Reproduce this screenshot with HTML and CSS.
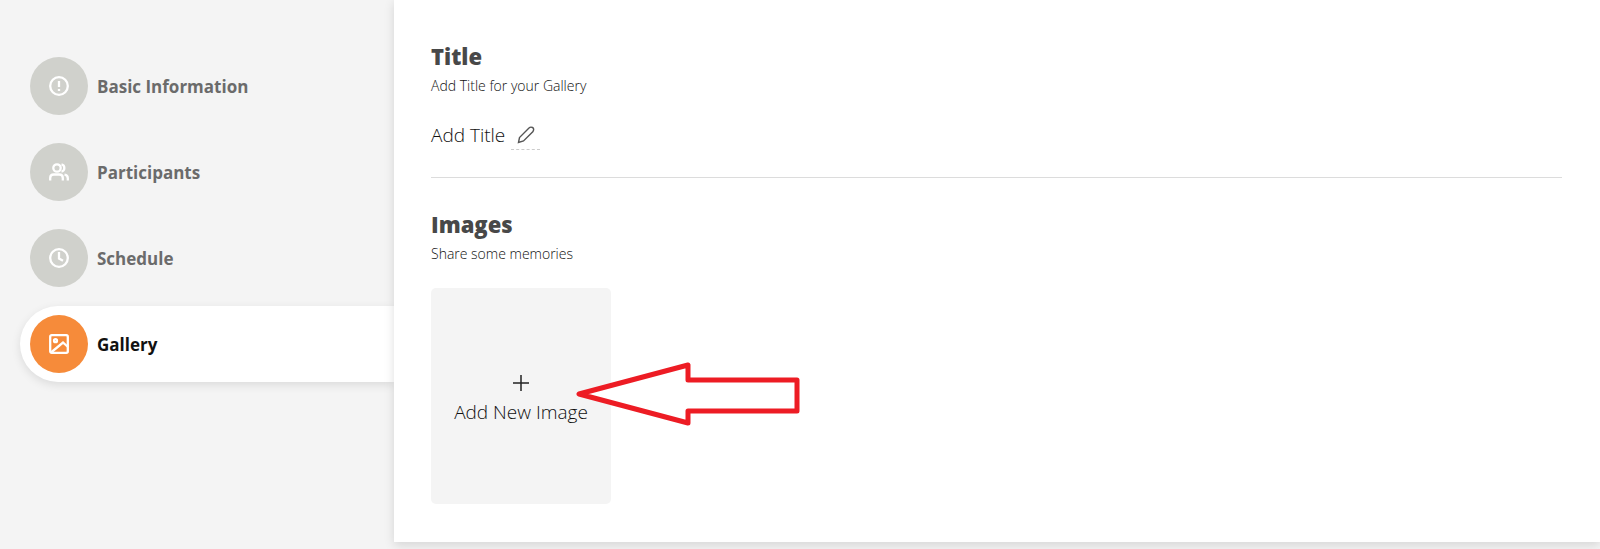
FILE: index.html
```html
<!DOCTYPE html>
<html lang="en">
<head>
  <meta charset="UTF-8">
  <title>Gallery</title>
  <meta name="viewport" content="width=device-width, initial-scale=1.0">
  <link rel="stylesheet" href="styles.css">
</head>
<body>
  <div class="page">
    <nav class="sidebar">
      <a href="#basic" class="step">
        <span class="step-icon">
          <svg viewBox="0 0 20 20"><circle cx="10" cy="10" r="8.800"/><path d="M10 5v6M10 13v2"/></svg>
        </span>
        Basic Information
      </a>
      <a href="#participants" class="step">
        <span class="step-icon">
          <svg viewBox="0 0 20 20"><circle cx="8" cy="6" r="3.700"/><path d="M1.200 18.500v-2.500q0-3.500 3.500-3.500h5.600q3.500 0 3.500 3.500v2.500M12.500 2.400a3.700 3.700 0 0 1 0 7.200M15.500 12.600q3.300.4 3.300 3.600v2.300"/></svg>
        </span>
        Participants
      </a>
      <a href="#schedule" class="step">
        <span class="step-icon">
          <svg viewBox="0 0 20 20"><circle cx="10" cy="10" r="8.800"/><path d="M10 4v6.500l4 2.200"/></svg>
        </span>
        Schedule
      </a>
      <a href="#gallery" class="step active">
        <span class="step-icon">
          <svg viewBox="0 0 20 20"><rect x="1.200" y="1.200" width="17.600" height="17.600" rx="1.500"/><path d="M2 18.500L14 8.500l5 4.500"/><circle cx="6.500" cy="6.700" r="1.500"/></svg>
        </span>
        Gallery
      </a>
    </nav>

    <main class="panel">
      <section class="title-section">
        <h2>Title</h2>
        <p class="hint">Add Title for your Gallery</p>
        <div class="title-row">
          <span>Add Title</span>
          <button type="button" class="edit-button" aria-label="Edit title">
            <svg viewBox="0 0 18 18"><path d="M1.500 16.500l1-5L12 2q1.500-1.500 3.500-.5t.5 4L6.500 15z"/></svg>
          </button>
        </div>
      </section>

      <section>
        <h2>Images</h2>
        <p class="hint">Share some memories</p>
        <div class="images">
          <button type="button" class="add-image">
            <svg class="plus" viewBox="0 0 16 16"><path d="M8 0v16M0 8h16"/></svg>
            Add New Image
          </button>
          <svg class="arrow" viewBox="0 0 226 64"><path d="M4 32L113 3v15h109v31H113v12z"/></svg>
        </div>
      </section>
    </main>
  </div>
</body>
</html>
```
FILE: styles.css
```css
* {
  box-sizing: border-box;
}
body {
  margin: 0;
  background: #f4f4f4;
  color: #111;
  font-family: "Segoe UI", "Open Sans", "Noto Sans", sans-serif;
}
h2, p {
  margin: 0;
}
button {
  font: inherit;
  color: inherit;
  border: none;
  cursor: pointer;
}
.page {
  display: flex;
  padding-bottom: 7px;
}
.sidebar {
  flex: 0 0 394px;
  display: flex;
  flex-direction: column;
  gap: 10px;
  padding: 48px 0 0 20px;
}
.step {
  display: flex;
  align-items: center;
  gap: 9px;
  height: 76px;
  padding-left: 10px;
  border-radius: 38px 0 0 38px;
  color: #6b6b6b;
  font-size: 17px;
  font-weight: 700;
  text-decoration: none;
}
.step-icon {
  display: flex;
  align-items: center;
  justify-content: center;
  width: 58px;
  height: 58px;
  border-radius: 50%;
  background: #d0d1cc;
}
.step-icon svg {
  width: 20px;
  height: 20px;
  fill: none;
  stroke: #fff;
  stroke-width: 2.3;
}
.step.active {
  background: #fff;
  color: #111;
  box-shadow: 0 3px 10px rgba(0, 0, 0, 0.1);
}
.step.active .step-icon {
  background: #f68b3a;
}
.panel {
  flex: 1;
  padding: 39px 38px 38px 37px;
  background: #fff;
  box-shadow: 0 3px 10px rgba(0, 0, 0, 0.13);
}
h2 {
  color: #484848;
  font-size: 22px;
  font-weight: 800;
  line-height: 35px;
}
.hint {
  font-size: 14px;
  font-weight: 300;
  line-height: 24px;
}
.title-section {
  margin-bottom: 29px;
  padding-bottom: 27px;
  border-bottom: 1px solid #dcdcdc;
}
.title-row {
  display: flex;
  gap: 6px;
  margin-top: 22px;
  font-size: 19px;
  font-weight: 300;
  line-height: 30px;
}
.edit-button {
  display: flex;
  align-items: center;
  justify-content: center;
  width: 29px;
  padding: 0;
  background: none;
  border-bottom: 1px dashed #ccc;
}
.edit-button svg {
  width: 18px;
  height: 18px;
  fill: none;
  stroke: #555;
  stroke-width: 1.4;
}
.images {
  position: relative;
  margin-top: 22px;
}
.add-image {
  display: flex;
  flex-direction: column;
  align-items: center;
  justify-content: center;
  gap: 8px;
  width: 180px;
  height: 216px;
  padding: 8px 0 0;
  border-radius: 5px;
  background: #f4f4f4;
  font-size: 19px;
  font-weight: 300;
}
.plus {
  width: 16px;
  height: 16px;
  stroke: #222;
  stroke-width: 1.5;
}
/* pointer drawn over the upload tile */
.arrow {
  position: absolute;
  top: 74px;
  left: 144px;
  width: 226px;
  height: 64px;
  fill: #fff;
  stroke: #ed1c24;
  stroke-width: 5;
  stroke-linejoin: round;
}
```
